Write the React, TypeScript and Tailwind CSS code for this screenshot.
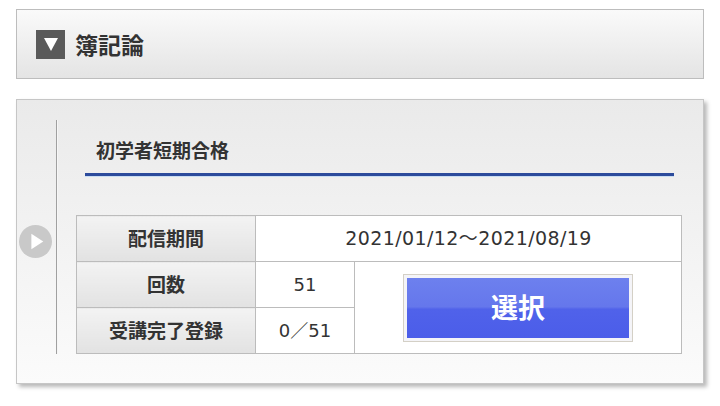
const font = "font-['Noto_Sans_CJK_JP','Noto_Sans',sans-serif]";
const numFont = "font-['DejaVu_Sans','Noto_Sans_CJK_JP',sans-serif]";

function DownIcon() {
  return (
    <span className="flex h-[29px] w-[29px] items-center justify-center bg-[#5a5a5a]">
      <svg width="14" height="13" viewBox="0 0 14 13">
        <path d="M0 0 H14 L7 13 Z" fill="#ffffff" />
      </svg>
    </span>
  );
}

function PlayCircle() {
  return (
    <svg width="33" height="33" viewBox="0 0 32 32">
      <circle cx="16" cy="16" r="16" fill="#c9c9c9" />
      <path d="M12 8.5 L23.5 16 L12 23.5 Z" fill="#ffffff" />
    </svg>
  );
}

const labelCell =
  "h-[46px] border border-[#bcbcbc] bg-[linear-gradient(#f3f3f3,#e2e2e2)] text-center text-[19px] font-bold text-[#333]";
const dataCell = `h-[46px] border border-[#bcbcbc] bg-white text-center text-[18px] text-[#333] ${numFont}`;

export default function App() {
  return (
    <div className={`${font} min-h-[406px] bg-white pt-[9px] px-[16px]`}>
      <div className="flex h-[70px] items-center gap-[10px] border border-[#bdbdbd] bg-[linear-gradient(#fafafa,#e4e4e4)] pl-[19px]">
        <DownIcon />
        <h2 className="text-[23px] font-bold leading-none text-[#333]">簿記論</h2>
      </div>

      <div className="mt-[20px] flex h-[285px] border border-[#c6c6c6] bg-[linear-gradient(#eaeaea,#fbfbfb)] shadow-[3px_3px_4px_rgba(0,0,0,0.28)]">
        <div className="flex w-[39px] items-center justify-center pr-[3px]">
          <PlayCircle />
        </div>
        <div className="mt-[20px] mb-[29px] flex-1 border-l border-[#a0a0a0] pl-[19px] pr-[20px] shadow-[inset_1px_0_0_#f6f6f6]">
          <div className="mx-[9px] border-b-[3px] border-[#2c4b9c] pt-[18px] pb-[11px] pl-[11px] shadow-[0_1px_0_#c9ddf2]">
            <h3 className="text-[19px] font-bold leading-[24px] text-[#333]">初学者短期合格</h3>
          </div>

          <table className="mt-[39px] w-[606px] border-collapse">
            <tbody>
              <tr>
                <th className={`${labelCell} w-[179px]`}>配信期間</th>
                <td className={`${dataCell} text-[19px] tracking-[0.4px]`} colSpan={2}>
                  2021/01/12～2021/08/19
                </td>
              </tr>
              <tr>
                <th className={labelCell}>回数</th>
                <td className={`${dataCell} w-[99px]`}>51</td>
                <td className="border border-[#bcbcbc] bg-white" rowSpan={2}>
                  <div className="flex justify-center">
                    <button className="h-[68px] w-[230px] border border-[#d4d0c6] bg-[#f4f4f8] p-[3px]">
                      <span className="flex h-full w-full items-center justify-center bg-[linear-gradient(#6d80ee_0%,#6577ec_48%,#5062ea_52%,#4b5de9_100%)] text-[27px] font-bold text-white">
                        選択
                      </span>
                    </button>
                  </div>
                </td>
              </tr>
              <tr>
                <th className={labelCell}>受講完了登録</th>
                <td className={dataCell}>0／51</td>
              </tr>
            </tbody>
          </table>
        </div>
      </div>
    </div>
  );
}
